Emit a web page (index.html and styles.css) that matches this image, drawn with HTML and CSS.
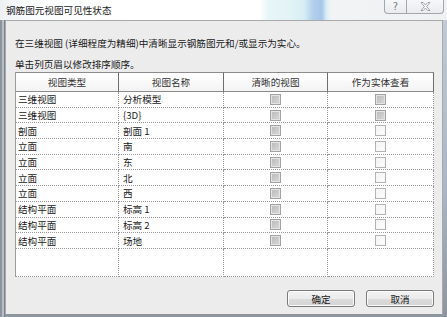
FILE: index.html
```html
<!DOCTYPE html>
<html lang="zh-CN">
<head>
    <meta charset="UTF-8">
    <title>钢筋图元视图可见性状态</title>
    <link rel="stylesheet" href="styles.css">
</head>
<body>
    <div class="window">
        <div class="titlebar">
            <span class="title">钢筋图元视图可见性状态</span>
            <div class="caption-buttons">
                <span class="cap-btn help">?</span>
                <span class="cap-btn close">
                    <svg width="11" height="9" viewBox="0 0 11 9">
                        <path d="M1 0.5h2.2l2.3 2.5 2.3-2.5h2.2l-3.4 4 3.4 4h-2.2l-2.3-2.5-2.3 2.5h-2.2l3.4-4z" fill="#fff" stroke="#8a8f96" stroke-width="0.8"/>
                    </svg>
                </span>
            </div>
        </div>

        <div class="panel">
            <p class="intro">在三维视图 (详细程度为精细)中清晰显示钢筋图元和/或显示为实心。</p>
            <p class="hint">单击列页眉以修改排序顺序。</p>

            <div class="grid">
                <div class="th">视图类型</div>
                <div class="th">视图名称</div>
                <div class="th">清晰的视图</div>
                <div class="th">作为实体查看</div>

                <div class="td">三维视图</div><div class="td name">分析模型</div>
                <div class="td box"><span class="cb cb-on"></span></div><div class="td box"><span class="cb cb-on"></span></div>

                <div class="td">三维视图</div><div class="td name">{3D}</div>
                <div class="td box"><span class="cb cb-on"></span></div><div class="td box"><span class="cb cb-on"></span></div>

                <div class="td">剖面</div><div class="td name">剖面 1</div>
                <div class="td box"><span class="cb cb-on"></span></div><div class="td box"><span class="cb"></span></div>

                <div class="td">立面</div><div class="td name">南</div>
                <div class="td box"><span class="cb cb-on"></span></div><div class="td box"><span class="cb"></span></div>

                <div class="td">立面</div><div class="td name">东</div>
                <div class="td box"><span class="cb cb-on"></span></div><div class="td box"><span class="cb"></span></div>

                <div class="td">立面</div><div class="td name">北</div>
                <div class="td box"><span class="cb cb-on"></span></div><div class="td box"><span class="cb"></span></div>

                <div class="td">立面</div><div class="td name">西</div>
                <div class="td box"><span class="cb cb-on"></span></div><div class="td box"><span class="cb"></span></div>

                <div class="td">结构平面</div><div class="td name">标高 1</div>
                <div class="td box"><span class="cb cb-on"></span></div><div class="td box"><span class="cb"></span></div>

                <div class="td">结构平面</div><div class="td name">标高 2</div>
                <div class="td box"><span class="cb cb-on"></span></div><div class="td box"><span class="cb"></span></div>

                <div class="td">结构平面</div><div class="td name">场地</div>
                <div class="td box"><span class="cb cb-on"></span></div><div class="td box"><span class="cb"></span></div>

                <div class="td filler"></div><div class="td filler"></div>
                <div class="td filler"></div><div class="td filler"></div>
            </div>

            <div class="actions">
                <button type="button">确定</button>
                <button type="button">取消</button>
            </div>
        </div>
    </div>
</body>
</html>
```

FILE: styles.css
```css
body {
    margin: 0;
    padding: 0;
    font-family: "Noto Sans CJK SC", "Liberation Sans", sans-serif;
    font-size: 9.6px;
    color: #1a1a1a;
}

.window {
    width: 447px;
    height: 317px;
    display: flex;
    flex-direction: column;
    background:
        linear-gradient(90deg, #8d949c 0, #8d949c 2px, #b6bec7 2px, #b6bec7 4px, #7d838a 4px, #7d838a 5px, transparent 5px),
        linear-gradient(180deg, #c3ccd6 0, #a9b6c4 60%, #8e959d 100%);
    overflow: hidden;
}

.titlebar {
    height: 20px;
    flex: none;
    display: flex;
    justify-content: space-between;
    align-items: flex-start;
    background: linear-gradient(90deg, #eef1f4 0, #fbfcfd 8%, #ffffff 30%, #ffffff 58%, #e8f6f8 60%, #e2f3f6 65%, #d6eef4 68%, #b3d0ec 70%, #a7c6ea 72%, #d8eef5 73%, #f2f3f4 74%, #f0f1f2 100%);
}

.title {
    padding: 3px 0 0 6px;
    line-height: 14px;
    color: #222;
}

.caption-buttons {
    display: flex;
    margin-right: 3px;
    border: 1px solid #a3a8ae;
    border-top: none;
    border-radius: 0 0 4px 4px;
    background: linear-gradient(#f6f7f8, #e9ebed);
    height: 13px;
}

.cap-btn {
    display: flex;
    align-items: center;
    justify-content: center;
    height: 13px;
}

.help {
    width: 21px;
    border-right: 1px solid #a3a8ae;
    color: #7b8088;
    font-family: "DejaVu Sans", sans-serif;
    font-size: 10px;
}

.close {
    width: 36px;
}

.panel {
    flex: 1;
    margin: 0 4px 3px 5px;
    padding: 0 8px 0 9px;
    background: #ececec;
    border: 1px solid #a9a9a9;
    border-bottom: none;
    display: flex;
    flex-direction: column;
}

.intro {
    margin: 15px 0 0;
    line-height: 14px;
}

.hint {
    margin: 7px 0 0;
    line-height: 14px;
}

.grid {
    margin-top: 1px;
    width: 419px;
    height: 205px;
    box-sizing: border-box;
    background: #fff;
    border-left: 1px solid #9c9c9c;
    display: grid;
    grid-template-columns: 103px 105px 104px 1fr;
    grid-template-rows: 20px repeat(10, 15.7px) 1fr;
}

.th {
    display: flex;
    align-items: center;
    justify-content: center;
    background: linear-gradient(#ffffff, #f3f3f3);
    border-top: 1px solid #8c8c8c;
    border-bottom: 1px solid #8c8c8c;
    border-right: 1px solid #6e6e6e;
    color: #333;
}

.th:last-of-type {
    border-right: 1px solid #8c8c8c;
}

.td {
    display: flex;
    align-items: center;
    padding-left: 2px;
    border-right: 1px dotted #9a9a9a;
    border-bottom: 1px dotted #9a9a9a;
    line-height: 14px;
    white-space: nowrap;
}

.td.name {
    padding-left: 4px;
}

.td.box {
    justify-content: center;
    padding-left: 0;
}

.cb {
    display: block;
    width: 9px;
    height: 9px;
    border: 1px solid #b3b3b3;
    background: linear-gradient(135deg, #f2f2f2, #ffffff);
    box-shadow: inset 0 0 0 1px #f7f7f7;
}

.cb-on {
    border-color: #a2a2a2;
    background: linear-gradient(135deg, #b8b8b8, #dadada);
    box-shadow: inset 0 0 0 1px #e4e4e4;
}

.actions {
    display: flex;
    justify-content: flex-end;
    gap: 11px;
    margin-top: 13px;
    padding-right: 0;
}

.actions button {
    width: 68px;
    height: 17px;
    padding: 0;
    border: 1px solid #7a7a7a;
    border-radius: 3px;
    background: linear-gradient(#f3f3f3 0, #ebebeb 50%, #dcdcdc 51%, #d4d4d4 100%);
    font-family: "Noto Sans CJK SC", sans-serif;
    font-size: 9.6px;
    color: #1a1a1a;
    box-shadow: inset 0 0 0 1px #fbfbfb;
}
```
